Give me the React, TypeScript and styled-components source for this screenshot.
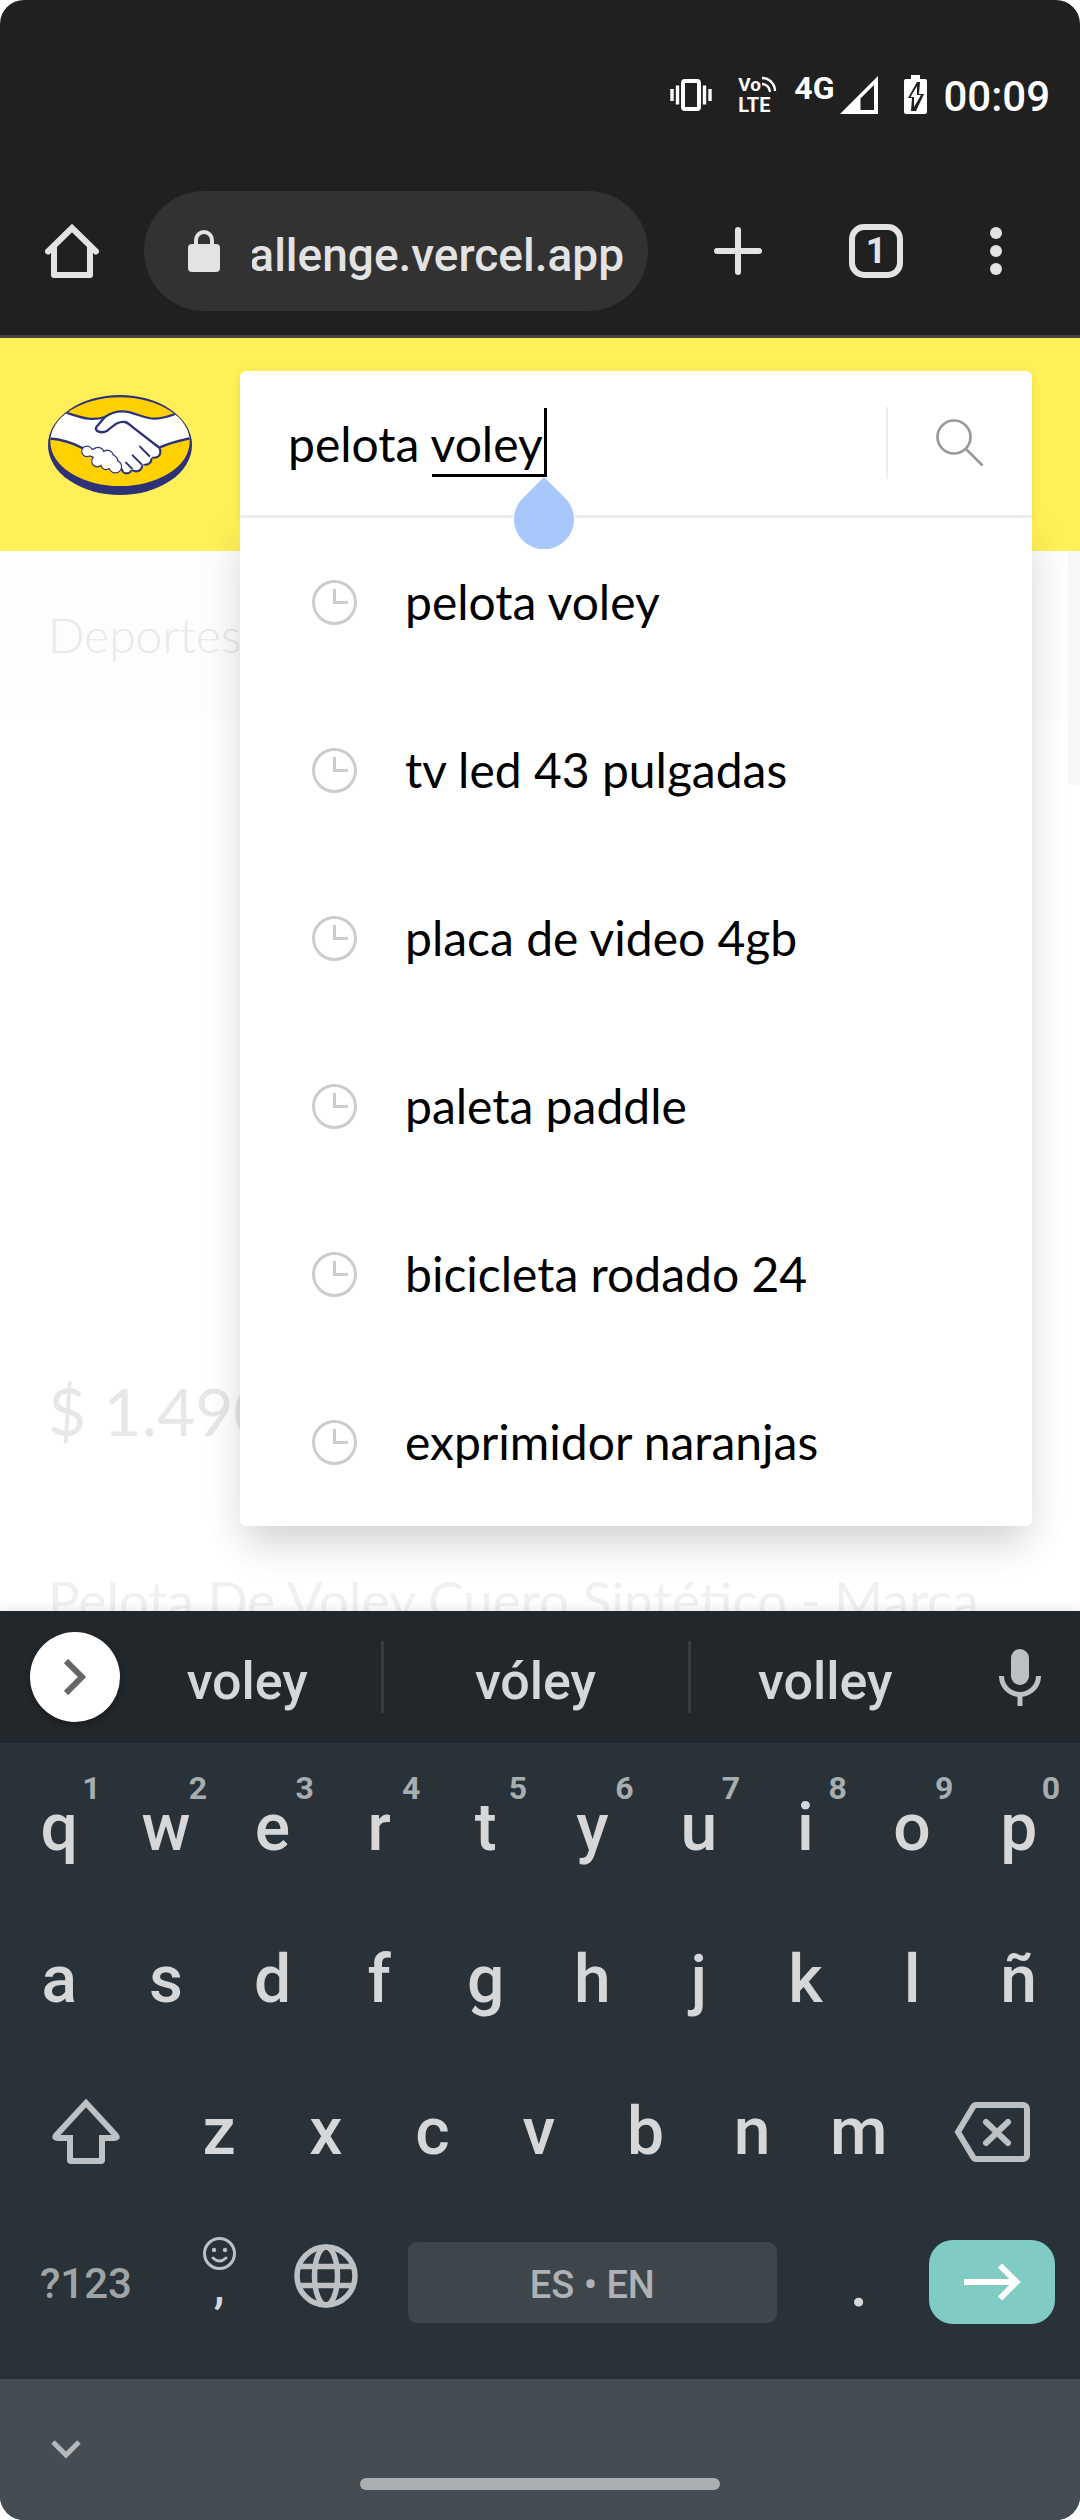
import React, { useState } from 'react';
import styled, { createGlobalStyle } from 'styled-components';

const ui = 'Roboto, "Liberation Sans", sans-serif';
const shop = 'Lato, "Liberation Sans", sans-serif';

const GlobalStyle = createGlobalStyle`
  *, *::before, *::after { box-sizing: border-box; }
  body { margin: 0; background: #fff; }
  button, input { font: inherit; color: inherit; background: none; border: 0; padding: 0; margin: 0; outline: none; }
  button { cursor: pointer; }
  ul { list-style: none; margin: 0; padding: 0; }
  svg { display: block; flex: none; }
`;

const Phone = styled.div`
  display: flex;
  flex-direction: column;
  height: 100vh;
  min-height: 2400px;
  overflow: hidden;
  border-radius: 24px;
  font-family: ${ui};
`;

/* ---------- system status bar and browser toolbar ---------- */

const BrowserChrome = styled.header`
  flex: none;
  background: #202020;
  color: #e3e3e3;
  border-bottom: 3px solid #444;
`;

const StatusBar = styled.div`
  display: flex;
  align-items: center;
  justify-content: flex-end;
  height: 167px;
  padding: 22px 30px 0 0;
  color: #fff;
`;

const StatusIcons = styled.div`
  display: flex;
  align-items: center;
  gap: 26px;
`;

const Signal = styled.div`
  display: flex;
  align-items: center;
  gap: 6px;
  margin-left: -12px;
`;

const Network = styled.span`
  align-self: flex-start;
  font-size: 32px;
  line-height: 24px;
  font-weight: 700;
`;

const Clock = styled.time`
  margin-left: 16px;
  padding-top: 4px;
  font-size: 42px;
  line-height: 48px;
  font-weight: 500;
`;

const Toolbar = styled.nav`
  display: flex;
  align-items: center;
  height: 168px;
  padding-right: 36px;
`;

const ToolButton = styled.button<{ $width: number }>`
  display: flex;
  align-items: center;
  justify-content: center;
  flex: none;
  width: ${(p) => p.$width}px;
  height: 96px;
`;

const AddressBar = styled.button`
  display: flex;
  align-items: center;
  gap: 32px;
  flex: 1;
  min-width: 0;
  height: 120px;
  margin-right: 24px;
  padding: 0 24px 0 44px;
  border-radius: 60px;
  background: #323232;
`;

const Address = styled.span`
  display: flex;
  justify-content: flex-end;
  flex: 1;
  min-width: 0;
  overflow: hidden;
  padding-top: 8px;
  font-size: 46px;
  line-height: 60px;
  font-weight: 500;
  white-space: nowrap;
`;

const TabCount = styled.span`
  display: flex;
  align-items: center;
  justify-content: center;
  width: 54px;
  height: 54px;
  border: 6px solid #e3e3e3;
  border-radius: 15px;
  font-size: 36px;
  line-height: 42px;
  font-weight: 700;
`;

/* ---------- shop page ---------- */

const Page = styled.div`
  flex: 1 1 0;
  min-height: 0;
  overflow: hidden;
  background: #fff;
  font-family: ${shop};
`;

const ShopHeader = styled.div`
  position: relative;
  z-index: 1;
  display: flex;
  align-items: center;
  gap: 48px;
  height: 213px;
  padding: 0 48px;
  background: #fff059;
`;

const LogoLink = styled.a`
  flex: none;
`;

const Search = styled.form`
  position: relative;
  flex: 1;
  min-width: 0;
  margin: 0;
  border-radius: 6px;
  box-shadow: 0 3px 9px rgba(0, 0, 0, 0.1);
`;

const SearchField = styled.div`
  position: relative;
  z-index: 1;
  display: flex;
  align-items: center;
  height: 147px;
  border-bottom: 3px solid #eee;
  border-radius: 6px 6px 0 0;
  background: #fff;
`;

const SearchInput = styled.input`
  flex: 1;
  min-width: 0;
  height: 144px;
  padding: 0 48px;
  font-size: 48px;
  color: #000;
  caret-color: transparent;
`;

const SearchButton = styled.button`
  display: flex;
  align-items: center;
  justify-content: center;
  flex: none;
  width: 146px;
  height: 72px;
  border-left: 2px solid #eee;
`;

/* The word being composed: underlined, closed by the text cursor. */
const Composing = styled.span`
  position: absolute;
  left: 192px;
  top: 37px;
  width: 115px;
  height: 69px;
  border-right: 3px solid #000;
  border-bottom: 3px solid #000;
  pointer-events: none;
`;

const CursorHandle = styled.svg`
  position: absolute;
  left: 274px;
  top: 106px;
`;

const Suggestions = styled.ul`
  position: absolute;
  top: 100%;
  left: 0;
  right: 0;
  border-radius: 0 0 6px 6px;
  background: #fff;
  box-shadow: 0 24px 36px -6px rgba(0, 0, 0, 0.13), 0 12px 48px rgba(0, 0, 0, 0.06);
`;

const Suggestion = styled.button`
  display: flex;
  align-items: center;
  gap: 48px;
  width: 100%;
  height: 168px;
  padding-left: 72px;
  font-size: 48px;
  line-height: 60px;
  color: #000;
`;

const Crumbs = styled.div`
  position: relative;
  height: 167px;
  padding: 54px 48px 0;
  background: #fdfdfd;
  color: #e9e9e9;
  font-size: 48px;
  line-height: 60px;
  font-weight: 300;
`;

const CrumbEdge = styled.span`
  position: absolute;
  top: 0;
  right: 0;
  width: 12px;
  height: 234px;
  background: #f7f7f7;
`;

const Product = styled.article`
  display: flex;
  flex-direction: column;
  gap: 114px;
  padding: 651px 48px 0;
`;

const Price = styled.p`
  margin: 0;
  font-size: 66px;
  line-height: 84px;
  color: #e7e7e7;
`;

const Title = styled.h1`
  margin: 0;
  font-size: 53px;
  line-height: 66px;
  font-weight: 400;
  color: #f0f0f0;
  white-space: nowrap;
`;

/* ---------- on-screen keyboard ---------- */

const Keyboard = styled.section`
  position: relative;
  z-index: 2;
  flex: none;
  background: #283238;
  color: #d6d7d9;
  box-shadow: 0 0 12px rgba(0, 0, 0, 0.12);
  font-weight: 500;
`;

const Candidates = styled.div`
  display: grid;
  grid-template-columns: 114px 1fr 307px 1fr 120px;
  align-items: center;
  height: 132px;
  background: #22272b;
`;

const Expand = styled.button`
  display: flex;
  align-items: center;
  justify-content: center;
  width: 90px;
  height: 90px;
  margin-left: 30px;
  border-radius: 50%;
  background: #fff;
  box-shadow: 0 3px 6px rgba(0, 0, 0, 0.3);
`;

const Candidate = styled.button<{ $divided?: boolean }>`
  height: 72px;
  padding-top: 10px;
  border-right: ${(p) => (p.$divided ? '3px solid #373c40' : '0')};
  font-size: 52px;
  line-height: 60px;
`;

const Mic = styled.button`
  display: flex;
  justify-content: center;
`;

const Keys = styled.div`
  padding: 9px 8px 19px 6px;
`;

const KeyRow = styled.div<{ $columns: string }>`
  display: grid;
  grid-template-columns: ${(p) => p.$columns};
  height: 152px;
`;

const Key = styled.button<{ $small?: boolean; $raised?: boolean }>`
  position: relative;
  display: flex;
  align-items: center;
  justify-content: center;
  padding-bottom: ${(p) => (p.$raised ? 16 : 0)}px;
  font-size: ${(p) => (p.$small ? 42 : 66)}px;
  line-height: 78px;
  color: ${(p) => (p.$small ? '#9fa4a6' : '#d6d7d9')};
`;

const Hint = styled.span`
  position: absolute;
  top: 20px;
  right: 12px;
  font-size: 32px;
  line-height: 32px;
  font-weight: 700;
  color: #a8adaf;
`;

const CommaKey = styled.button`
  display: flex;
  flex-direction: column;
  align-items: center;
  padding-top: 29px;
  font-size: 48px;
  line-height: 32px;
`;

const SpaceKey = styled.button`
  align-self: center;
  height: 81px;
  margin: 0 29px 4px;
  padding-top: 6px;
  border-radius: 9px;
  background: #3c464b;
  font-size: 38px;
  line-height: 48px;
  color: #aeb2b4;
`;

const EnterKey = styled.button`
  display: flex;
  align-items: center;
  justify-content: center;
  align-self: center;
  justify-self: center;
  width: 126px;
  height: 84px;
  margin-bottom: 4px;
  border-radius: 24px;
  background: #80cbc4;
`;

const NavBar = styled.footer`
  display: grid;
  grid-template-columns: 1fr 360px 1fr;
  height: 141px;
  background: #454c52;
`;

const HideKeyboard = styled.button`
  align-self: start;
  justify-self: start;
  padding: 58px 48px 24px;
`;

const HomeIndicator = styled.span`
  align-self: end;
  height: 12px;
  margin-bottom: 30px;
  border-radius: 6px;
  background: #abafb2;
`;

/* ---------- drawings ---------- */

const VibrateIcon = () => (
  <svg width="42" height="32" viewBox="0 0 42 32" fill="none" stroke="#fff">
    <rect x="13" y="2" width="16" height="28" rx="2" strokeWidth="4" />
    <path d="M2 10v12M40 10v12" strokeWidth="3.4" />
    <path d="M7.500 6.500v19M34.500 6.500v19" strokeWidth="3.4" />
  </svg>
);

/* "Vo" over "LTE", with two radio waves beside the first line. */
const Volte = styled.span`
  display: grid;
  grid-template-columns: auto auto;
  justify-content: start;
  width: 42px;
  font-size: 19px;
  line-height: 20px;
  font-weight: 700;
`;

const VolteBottom = styled.span`
  grid-column: 1 / 3;
  font-size: 20px;
`;

const WavesIcon = () => (
  <svg width="16" height="18" viewBox="0 0 16 18" fill="none" stroke="#fff" strokeWidth="2.400">
    <path d="M1 3a13 13 0 0 1 13 13" />
    <path d="M1 9a8 8 0 0 1 8 8" />
  </svg>
);

const SignalIcon = () => (
  <svg width="38" height="38" viewBox="0 0 38 38">
    <path d="M0 38L38 0v38z" fill="#fff" />
    <path d="M20.500 22.500L34 9v25H20.500z" fill="#202020" />
  </svg>
);

const BatteryIcon = () => (
  <svg width="23" height="39" viewBox="0 0 23 39">
    <path d="M7 0h9v4h5a2 2 0 0 1 2 2v31a2 2 0 0 1-2 2H2a2 2 0 0 1-2-2V6a2 2 0 0 1 2-2h5z" fill="#fff" />
    <path d="M13 7L4 23h4l-1 13h5l8-17h-5l1-12z" fill="#202020" />
    <path d="M13 11L6.500 22H10v10l7-12h-4z" fill="#fff" />
  </svg>
);

const HomeIcon = () => (
  <svg width="56" height="56" viewBox="0 0 56 56" fill="none" stroke="#e3e3e3" strokeWidth="6" strokeLinecap="round" strokeLinejoin="round">
    <path d="M4 28.500L28 5l24 23.500" strokeLinejoin="miter" />
    <path d="M10 24v28h36V24" />
  </svg>
);

const LockIcon = () => (
  <svg width="32" height="42" viewBox="0 0 32 42">
    <rect x="0" y="14" width="32" height="28" rx="4" fill="#e3e3e3" />
    <path d="M8 15V10a8 8 0 0 1 16 0v5" fill="none" stroke="#e3e3e3" strokeWidth="4" />
  </svg>
);

const PlusIcon = () => (
  <svg width="48" height="48" viewBox="0 0 48 48" stroke="#e3e3e3" strokeWidth="6" strokeLinecap="round">
    <path d="M24 3v42M3 24h42" />
  </svg>
);

const DotsIcon = () => (
  <svg width="12" height="48" viewBox="0 0 12 48" fill="#e3e3e3">
    <circle cx="6" cy="6" r="6" />
    <circle cx="6" cy="24" r="6" />
    <circle cx="6" cy="42" r="6" />
  </svg>
);

const SearchIcon = () => (
  <svg width="48" height="48" viewBox="0 0 48 48" fill="none" stroke="#999" strokeWidth="2.700">
    <circle cx="18" cy="18" r="16.500" />
    <path d="M30 30l16.500 16.500" />
  </svg>
);

const HistoryIcon = () => (
  <svg width="45" height="45" viewBox="0 0 45 45" fill="none" stroke="#ccc" strokeWidth="3">
    <circle cx="22.500" cy="22.500" r="21" />
    <path d="M22.500 9v13.500H36" />
  </svg>
);

const leftFingers: [number, number, number][] = [
  [171, 209, 14], [188, 214, 10], [204, 216, 17], [232, 223, 16],
  [202, 239, 15], [218, 232, 18], [228, 249, 13], [242, 240, 20], [256, 255, 17],
];
const rightFingers: [number, number, number][] = [
  [373, 210, 15], [347, 232, 14], [319, 252, 14], [290, 261, 11],
];

const HandshakeLogo = () => (
  <svg width="144" height="100" viewBox="54 40 432 300">
    <defs>
      <clipPath id="coin"><ellipse cx="270" cy="180" rx="209" ry="133" /></clipPath>
    </defs>
    <ellipse cx="270" cy="190" rx="216" ry="150" fill="#2d3277" />
    <ellipse cx="270" cy="180" rx="209" ry="133" fill="#ffd100" />
    <g stroke="#2d3277" strokeWidth="7" strokeLinecap="round" strokeLinejoin="round">
      <g clipPath="url(#coin)">
        <path
          fill="#fff"
          d="M50 70L115 95C150 105 180 120 225 106C245 92 270 85 300 92C330 100 350 112 375 111C400 110 420 103 435 97L510 70V164C450 174 420 184 389 197L290 240L155 198C130 185 100 172 50 170Z"
        />
      </g>
      {rightFingers.map(([x, y, r]) => <circle key={x} cx={x} cy={y} r={r + 3} />)}
      {rightFingers.map(([x, y, r]) => <circle key={x} cx={x} cy={y} r={r} fill="#fff" stroke="none" />)}
      <path fill="#fff" stroke="none" d="M160 190L285 118L308 132L386 200L374 220L348 243L320 261L290 268L240 240Z" />
      <path fill="none" d="M330 195l28 28M308 221l27 27M288 243l18 18" strokeWidth="6" />
      <path fill="#fff" d="M225 106L199 136C193 149 213 157 232 147C250 133 265 117 285 121C292 122 300 130 305 134L385 196" />
      {leftFingers.map(([x, y, r]) => <circle key={`${x}-${y}`} cx={x} cy={y} r={r} />)}
      {leftFingers.map(([x, y, r]) => <circle key={`${x}-${y}`} cx={x} cy={y} r={r} fill="#fff" stroke="none" />)}
    </g>
  </svg>
);

const ShiftIcon = () => (
  <svg width="68" height="66" viewBox="0 0 68 66" fill="none" stroke="#bdc1c4" strokeWidth="6" strokeLinejoin="round">
    <path d="M34 4L4 36.500q-2 2.500 2 2.500H18v22q0 1 1 1h30q1 0 1-1V39h12q4 0 2-2.500z" strokeLinejoin="miter" />
  </svg>
);

const BackspaceIcon = () => (
  <svg width="76" height="60" viewBox="0 0 76 60" fill="none" stroke="#bdc1c4" strokeWidth="6" strokeLinecap="round">
    <path d="M22 3H69a4 4 0 0 1 4 4v46a4 4 0 0 1-4 4H22q-2 0-3-2L4 30L19 5q1-2 3-2z" />
    <path d="M32 20l22 21M54 20L32 41" />
  </svg>
);

const SmileIcon = () => (
  <svg width="33" height="33" viewBox="0 0 33 33" fill="none" stroke="#bdc1c4" strokeWidth="3">
    <circle cx="16.500" cy="16.500" r="15" />
    <path d="M10 21q6.500 6 13 0" strokeLinecap="round" />
    <circle cx="11" cy="13" r="2.200" fill="#bdc1c4" stroke="none" />
    <circle cx="22" cy="13" r="2.200" fill="#bdc1c4" stroke="none" />
  </svg>
);

const GlobeIcon = () => (
  <svg width="64" height="64" viewBox="0 0 64 64" fill="none" stroke="#bdc1c4" strokeWidth="5.500">
    <circle cx="32" cy="32" r="29" />
    <ellipse cx="32" cy="32" rx="11.500" ry="29" />
    <path d="M5 22.500h54M5 41.500h54" />
  </svg>
);

const MicIcon = () => (
  <svg width="42" height="57" viewBox="0 0 42 57" fill="none" stroke="#bdc1c4">
    <rect x="12" y="0" width="18" height="36" rx="9" fill="#bdbfc1" stroke="none" />
    <path d="M2.500 27a18.500 18.500 0 0 0 37 0M21 45v12" strokeWidth="5" />
  </svg>
);

const ChevronRight = () => (
  <svg width="22" height="36" viewBox="0 0 22 36" fill="none" stroke="#666" strokeWidth="6">
    <path d="M2 2l16 16L2 34" />
  </svg>
);

const ChevronDown = () => (
  <svg width="36" height="24" viewBox="0 0 36 24" fill="none" stroke="#b4b8bb" strokeWidth="5">
    <path d="M5 5l13 13L31 5" />
  </svg>
);

const ArrowIcon = () => (
  <svg width="57" height="38" viewBox="0 0 57 38" fill="none" stroke="#fff" strokeWidth="6">
    <path d="M0 19h52M36 2.500L52.500 19L36 35.500" />
  </svg>
);

/* ---------- screen ---------- */

const history = [
  'pelota voley',
  'tv led 43 pulgadas',
  'placa de video 4gb',
  'paleta paddle',
  'bicicleta rodado 24',
  'exprimidor naranjas',
];

const letterColumns = 'repeat(10, 1fr)';
const thirdColumns = '3fr repeat(7, 2fr) 3fr';
const bottomColumns = '3fr 2fr 2fr 8fr 2fr 3fr';

export default function App() {
  const [query, setQuery] = useState('pelota voley');

  return (
    <Phone>
      <GlobalStyle />
      <BrowserChrome>
        <StatusBar>
          <StatusIcons>
            <VibrateIcon />
            <Volte>
              <span>Vo</span>
              <WavesIcon />
              <VolteBottom>LTE</VolteBottom>
            </Volte>
            <Signal>
              <Network>4G</Network>
              <SignalIcon />
            </Signal>
            <BatteryIcon />
          </StatusIcons>
          <Clock>00:09</Clock>
        </StatusBar>
        <Toolbar>
          <ToolButton $width={144} aria-label="Inicio"><HomeIcon /></ToolButton>
          <AddressBar>
            <LockIcon />
            <Address>allenge.vercel.app</Address>
          </AddressBar>
          <ToolButton $width={132} aria-label="Nueva pestaña"><PlusIcon /></ToolButton>
          <ToolButton $width={144}><TabCount>1</TabCount></ToolButton>
          <ToolButton $width={96} aria-label="Más opciones"><DotsIcon /></ToolButton>
        </Toolbar>
      </BrowserChrome>

      <Page>
        <ShopHeader>
          <LogoLink href="#" aria-label="Portada"><HandshakeLogo /></LogoLink>
          <Search role="search" onSubmit={(e) => e.preventDefault()}>
            <SearchField>
              <SearchInput
                aria-label="Buscar"
                value={query}
                spellCheck={false}
                onChange={(e) => setQuery(e.target.value)}
              />
              <SearchButton type="submit" aria-label="Buscar"><SearchIcon /></SearchButton>
              <Composing />
              <CursorHandle width="60" height="72" viewBox="0 0 60 72">
                <path d="M30 0L51 21A30 30 0 1 1 9 21Z" fill="#a8c7fa" />
              </CursorHandle>
            </SearchField>
            <Suggestions>
              {history.map((term) => (
                <li key={term}>
                  <Suggestion type="button" onClick={() => setQuery(term)}>
                    <HistoryIcon />
                    {term}
                  </Suggestion>
                </li>
              ))}
            </Suggestions>
          </Search>
        </ShopHeader>
        <Crumbs>
          Deportes
          <CrumbEdge />
        </Crumbs>
        <Product>
          <Price>$ 1.490</Price>
          <Title>Pelota De Voley Cuero Sintético - Marca</Title>
        </Product>
      </Page>

      <Keyboard>
        <Candidates>
          <Expand aria-label="Más herramientas"><ChevronRight /></Expand>
          <Candidate $divided>voley</Candidate>
          <Candidate $divided>vóley</Candidate>
          <Candidate>volley</Candidate>
          <Mic aria-label="Dictado"><MicIcon /></Mic>
        </Candidates>
        <Keys>
          <KeyRow $columns={letterColumns}>
            {[...'qwertyuiop'].map((letter, i) => (
              <Key key={letter}>
                {letter}
                <Hint>{(i + 1) % 10}</Hint>
              </Key>
            ))}
          </KeyRow>
          <KeyRow $columns={letterColumns}>
            {[...'asdfghjklñ'].map((letter) => <Key key={letter}>{letter}</Key>)}
          </KeyRow>
          <KeyRow $columns={thirdColumns}>
            <Key aria-label="Mayúsculas"><ShiftIcon /></Key>
            {[...'zxcvbnm'].map((letter) => <Key key={letter}>{letter}</Key>)}
            <Key aria-label="Borrar"><BackspaceIcon /></Key>
          </KeyRow>
          <KeyRow $columns={bottomColumns}>
            <Key $small>?123</Key>
            <CommaKey><SmileIcon />,</CommaKey>
            <Key $raised aria-label="Idioma"><GlobeIcon /></Key>
            <SpaceKey>ES • EN</SpaceKey>
            <Key>.</Key>
            <EnterKey aria-label="Ir"><ArrowIcon /></EnterKey>
          </KeyRow>
        </Keys>
        <NavBar>
          <HideKeyboard aria-label="Ocultar teclado"><ChevronDown /></HideKeyboard>
          <HomeIndicator />
        </NavBar>
      </Keyboard>
    </Phone>
  );
}
